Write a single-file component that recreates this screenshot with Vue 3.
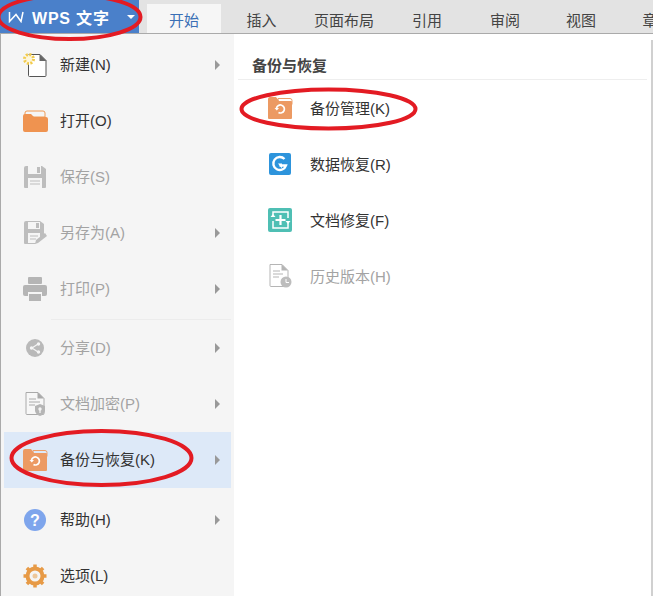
<script setup>
const tabs = [
  { label: '插入', width: 77 },
  { label: '页面布局', width: 88 },
  { label: '引用', width: 78 },
  { label: '审阅', width: 78 },
  { label: '视图', width: 74 },
  { label: '章', width: 64 }
]
const leftTop = [
  { icon: 'new', label: '新建(N)', arrow: true },
  { icon: 'open', label: '打开(O)' },
  { icon: 'save', label: '保存(S)', dim: true },
  { icon: 'saveas', label: '另存为(A)', dim: true, arrow: true },
  { icon: 'print', label: '打印(P)', dim: true, arrow: true }
]
const leftMid = [
  { icon: 'share', label: '分享(D)', dim: true, arrow: true },
  { icon: 'lock', label: '文档加密(P)', dim: true, arrow: true },
  { icon: 'folder', label: '备份与恢复(K)', arrow: true, active: true }
]
const leftEnd = [
  { icon: 'help', label: '帮助(H)', arrow: true },
  { icon: 'gear', label: '选项(L)' }
]
const rightItems = [
  { icon: 'folder', label: '备份管理(K)' },
  { icon: 'restore', label: '数据恢复(R)' },
  { icon: 'repair', label: '文档修复(F)' },
  { icon: 'history', label: '历史版本(H)', dim: true }
]
const groups = [leftTop, leftMid, leftEnd]
</script>

<template>
  <div class="page">
    <header class="bar">
      <div class="brand">
        <svg class="logo" viewBox="0 0 16 12" width="16" height="12"><path d="M1.500 1v9.500L8 3.500l5 7L15 1" fill="none" stroke="#fff" stroke-width="1.500"/></svg>
        <span class="brand-name">WPS 文字</span>
        <i class="caret"></i>
      </div>
      <nav class="tabs">
        <span class="tab current">开始</span>
        <span v-for="t in tabs" :key="t.label" class="tab" :style="{ width: t.width + 'px' }">{{ t.label }}</span>
      </nav>
    </header>

    <main class="menu">
      <aside class="left">
        <template v-for="(group, gi) in groups" :key="gi">
          <div v-if="gi" class="sep" :class="{ ghost: gi === 2 }"></div>
          <div v-for="item in group" :key="item.label" class="row" :class="{ dim: item.dim, active: item.active }">
            <span class="ico">
              <svg viewBox="0 0 26 26" width="26" height="26">
                <g v-if="item.icon === 'new'">
                  <path d="M6.500 2.500h11.500l6 6v15a1 1 0 0 1-1 1H7.500a1 1 0 0 1-1-1z" fill="#fff" stroke="#555" stroke-width="1"/>
                  <path d="M17.500 2l7 7h-7z" fill="#666"/>
                  <circle cx="7" cy="7" r="4.500" fill="#fdf6dc" stroke="#f2cb4c" stroke-width="3" stroke-dasharray="2 1.500"/>
                </g>
                <g v-else-if="item.icon === 'open'">
                  <path d="M3 5q0-2 2-2h16q2 0 2 2v4H3z" fill="none" stroke="#ef9a55" stroke-width="1"/>
                  <path d="M1 8q0-2 2-2h6l3 3h12q2 0 2 2v11q0 2-2 2H3q-2 0-2-2z" fill="#ef9350"/>
                </g>
                <g v-else-if="item.icon === 'save'">
                  <path d="M2 4q0-2 2-2h16l4 3v18q0 1-1 1H3q-1 0-1-1z" fill="#bdbdbd"/>
                  <rect x="6" y="2" width="13" height="8" fill="#f5f5f5"/>
                  <rect x="15" y="3" width="3" height="6" fill="#bdbdbd"/>
                  <rect x="6" y="14" width="14" height="10" fill="#f5f5f5"/>
                  <path d="M8 17h10M8 20h10" stroke="#bdbdbd"/>
                </g>
                <g v-else-if="item.icon === 'saveas'">
                  <path d="M2 3q0-2 2-2h14l4 3v12l-9 8H3q-1 0-1-1z" fill="#bdbdbd"/>
                  <rect x="6" y="2" width="12" height="7" fill="#f5f5f5"/>
                  <rect x="14" y="3" width="3" height="5" fill="#bdbdbd"/>
                  <rect x="6" y="13" width="12" height="10" fill="#f5f5f5"/>
                  <path d="M8 16h8M8 19h6" stroke="#bdbdbd"/>
                  <path d="M13 24l1-4 9-7 2 3-9 7z" fill="#bdbdbd"/>
                </g>
                <g v-else-if="item.icon === 'print'">
                  <rect x="6" y="1" width="14" height="7" rx="1" fill="#b5b5b5"/>
                  <rect x="1" y="9" width="24" height="11" rx="2" fill="#b5b5b5"/>
                  <rect x="6" y="16" width="14" height="9" fill="#f5f5f5"/>
                  <rect x="7" y="18" width="12" height="7" fill="#b5b5b5"/>
                </g>
                <g v-else-if="item.icon === 'share'">
                  <circle cx="13" cy="13" r="9" fill="#b9b9b9"/>
                  <path d="M16 9l-6 4 6 4" fill="none" stroke="#f5f5f5" stroke-width="1.200"/>
                  <circle cx="16.500" cy="9" r="1.700" fill="#f5f5f5"/><circle cx="9.500" cy="13" r="1.700" fill="#f5f5f5"/><circle cx="16.500" cy="17" r="1.700" fill="#f5f5f5"/>
                </g>
                <g v-else-if="item.icon === 'lock'">
                  <path d="M4 1.500h12l6 6v15a1 1 0 0 1-1 1H5a1 1 0 0 1-1-1z" fill="#f7f7f7" stroke="#aaa"/>
                  <path d="M15.500 1l6.500 6.500h-6.500z" fill="#aaa"/>
                  <path d="M7 8h7M7 11h11M7 14h6" stroke="#aaa"/>
                  <path d="M13 15l5-2 5 2v5q-1 4-5 5-4-1-5-5z" fill="#b5b5b5"/>
                  <circle cx="18" cy="18" r="1.700" fill="#f5f5f5"/><path d="M18 19v3" stroke="#f5f5f5" stroke-width="1.300"/>
                </g>
                <g v-else-if="item.icon === 'folder'">
                  <path d="M11 3.500h12q2 0 2 2v4H11z" fill="none" stroke="#ee9f68"/>
                  <path d="M1 4q0-2 2-2h6l3 4h12q1 0 1 1v16q0 1-1 1H2q-1 0-1-1z" fill="#ec9a63"/>
                  <path d="M9.500 13a4 4 0 1 1 2 4.500" fill="none" stroke="#fff" stroke-width="1.700"/>
                  <path d="M7.500 13h4.500l-2.200 2.500z" fill="#fff"/>
                </g>
                <g v-else-if="item.icon === 'help'">
                  <circle cx="13" cy="13" r="11" fill="#7ea5ec"/>
                  <text x="13" y="18.500" text-anchor="middle" class="qm">?</text>
                </g>
                <g v-else-if="item.icon === 'gear'">
                  <circle cx="13" cy="13" r="7.500" fill="none" stroke="#e79a46" stroke-width="4"/>
                  <path d="M13 1.500v4M13 20.500v4M1.500 13h4M20.500 13h4M4.900 4.900l2.800 2.800M18.300 18.300l2.800 2.800M4.900 21.100l2.800-2.800M18.300 7.700l2.800-2.800" stroke="#e79a46" stroke-width="3.500"/>
                  <circle cx="13" cy="13" r="2.500" fill="#edc79a"/>
                </g>
              </svg>
            </span>
            <span class="text">{{ item.label }}</span>
            <i v-if="item.arrow" class="arrow"></i>
          </div>
        </template>
      </aside>

      <section class="right">
        <h2 class="title">备份与恢复</h2>
        <div v-for="item in rightItems" :key="item.label" class="sub" :class="{ dim: item.dim }">
          <span class="ico">
            <svg viewBox="0 0 26 26" width="26" height="26">
              <g v-if="item.icon === 'folder'">
                <path d="M11 3.500h12q2 0 2 2v4H11z" fill="none" stroke="#ee9f68"/>
                <path d="M1 4q0-2 2-2h6l3 4h12q1 0 1 1v16q0 1-1 1H2q-1 0-1-1z" fill="#ec9a63"/>
                <path d="M9.500 13a4 4 0 1 1 2 4.500" fill="none" stroke="#fff" stroke-width="1.700"/>
                <path d="M7.500 13h4.500l-2.200 2.500z" fill="#fff"/>
              </g>
              <g v-else-if="item.icon === 'restore'">
                <rect x="2" y="2" width="22" height="22" rx="2" fill="#2d94dc"/>
                <path d="M17.500 8a6.500 6.500 0 1 0 1.500 6.500H12.500" fill="none" stroke="#fff" stroke-width="2.400"/>
                <path d="M11 12.500l4 5v-5z" fill="#fff"/>
              </g>
              <g v-else-if="item.icon === 'repair'">
                <rect x="1" y="1" width="24" height="24" rx="2" fill="#4fbfb4"/>
                <path d="M6 8V5h15v6M21 16v5H6v-7" fill="none" stroke="#fff" stroke-width="1.500"/>
                <path d="M13.500 8v10M8.500 13h10" stroke="#fff" stroke-width="2.200"/>
                <path d="M3.500 10l2.500-3 2.500 3zM18.500 14l2.500 3 2.500-3z" fill="#fff"/>
              </g>
              <g v-else-if="item.icon === 'history'">
                <path d="M3 1.500h12l6 6v15a1 1 0 0 1-1 1H4a1 1 0 0 1-1-1z" fill="#fff" stroke="#b5b5b5"/>
                <path d="M14.500 1l6.500 6.500h-6.500z" fill="#b5b5b5"/>
                <path d="M6 8h7M6 11h10M6 14h6" stroke="#b5b5b5"/>
                <circle cx="19" cy="19" r="5.500" fill="#bdbdbd"/>
                <path d="M19 16v3.500h3" fill="none" stroke="#fff"/>
              </g>
            </svg>
          </span>
          <span class="text">{{ item.label }}</span>
        </div>
        <div class="scroll"></div>
      </section>
    </main>

    <svg class="marks" width="653" height="596" viewBox="0 0 653 596">
      <ellipse cx="69.500" cy="17" rx="71" ry="22" />
      <ellipse cx="328.500" cy="109" rx="87" ry="19.500" />
      <ellipse cx="101.500" cy="458" rx="90" ry="27" />
    </svg>
  </div>
</template>

<style scoped>
.page {
  position: relative;
  width: 653px;
  height: 596px;
  overflow: hidden;
  font-family: "Liberation Sans", "Noto Sans CJK SC", sans-serif;
  font-size: 15px;
  color: #333;
  background: #fff;
}
.bar {
  display: flex;
  height: 33px;
  background: #e3e3e3;
  border-bottom: 1px solid #aaa;
}
.brand {
  flex: none;
  display: flex;
  align-items: center;
  width: 139px;
  padding-left: 8px;
  box-sizing: border-box;
  background: #4a80ca;
  color: #fff;
}
.logo { margin-right: 8px; }
.brand-name { font-weight: 700; font-size: 16px; letter-spacing: .8px; white-space: nowrap; }
.caret {
  margin-left: 17px;
  border: 4px solid transparent;
  border-top-color: #fff;
  border-bottom: 0;
}
.tabs { display: flex; flex: none; margin-left: 8px; }
.tab {
  flex: none;
  margin-top: 4px;
  line-height: 33px;
  text-align: center;
  color: #444;
  white-space: nowrap;
}
.tab.current {
  width: 74px;
  background: #f6f6f6;
  color: #3a6fb5;
  margin-right: 2px;
}
.menu { display: flex; height: 562px; }
.left {
  flex: none;
  width: 234px;
  box-sizing: border-box;
  background: #f5f5f5;
  border-left: 1px solid #aaa;
  padding: 3px 3px 0 3px;
}
.row {
  display: flex;
  align-items: center;
  height: 56px;
  padding-left: 18px;
  position: relative;
}
.row .ico { width: 26px; height: 26px; margin-right: 12px; }
.row .text { color: #333; margin-bottom: 3px; }
.row.dim .text, .sub.dim .text { color: #a3a3a3; }
.row.active { background: #dde9f8; }
.arrow {
  position: absolute;
  right: 11px;
  top: 50%;
  margin-top: -5px;
  border: 5px solid transparent;
  border-left-color: #999;
  border-right: 0;
}
.sep { height: 3px; margin-left: 47px; border-bottom: 1px solid #ececec; box-sizing: border-box; }
.sep.ghost { height: 4px; border: 0; }
.right { flex: 1; position: relative; padding-top: 0; }
.title {
  margin: 0 6px 0 4px;
  padding: 22px 0 4px 14px;
  height: 19px;
  line-height: 19px;
  font-size: 15px;
  font-weight: 700;
  color: #444;
  border-bottom: 1px solid #eee;
}
.sub {
  display: flex;
  align-items: center;
  height: 56px;
  padding-left: 33px;
}
.sub .ico { width: 26px; height: 26px; margin-right: 17px; }
.sub .text { color: #333; margin-bottom: 2px; }
.scroll {
  position: absolute;
  right: 0;
  top: 6px;
  bottom: 0;
  width: 2px;
  background: #d0d0d0;
}
.ico svg { display: block; }
.qm { fill: #fff; font: 700 16px "Liberation Sans", sans-serif; }
.marks {
  position: absolute;
  left: 0;
  top: 0;
  pointer-events: none;
}
.marks ellipse { fill: none; stroke: #e31b23; stroke-width: 4; }
</style>
